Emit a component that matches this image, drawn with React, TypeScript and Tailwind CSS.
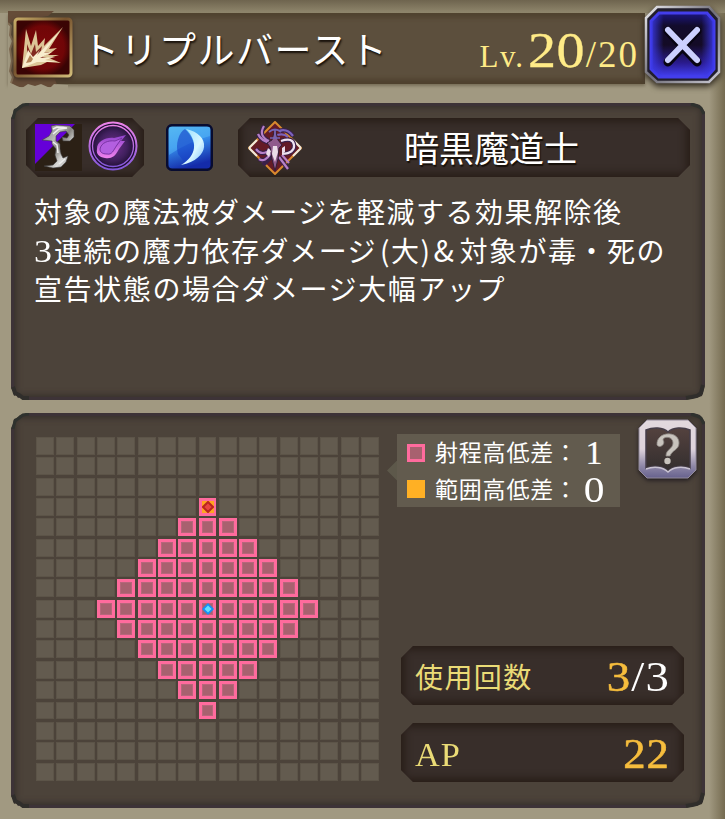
import React from "react";

const JP = "font-['Noto_Sans_CJK_JP',sans-serif]";
const SERIF = "font-['Liberation_Serif',serif]";
const OCTAGON =
  "[clip-path:polygon(12px_0,calc(100%-12px)_0,100%_12px,100%_calc(100%-12px),calc(100%-12px)_100%,12px_100%,0_calc(100%-12px),0_12px)]";
const WELL = "bg-[#382e2a] shadow-[inset_0_0_9px_3px_#261b15]";
const PANEL =
  "bg-[#4c433a] shadow-[inset_0_0_0_3px_#3d3337,inset_0_0_6px_5px_#37302b]";

function BurstIcon() {
  return (
    <svg width="60" height="62" viewBox="0 0 60 62" className="shrink-0 drop-shadow-[0_2px_2px_#3b2b20]">
      <defs>
        <linearGradient id="gold" x1="0" y1="0" x2="1" y2="1">
          <stop offset="0" stopColor="#c6ac68" />
          <stop offset=".45" stopColor="#77532e" />
          <stop offset="1" stopColor="#d0ba78" />
        </linearGradient>
        <radialGradient id="red">
          <stop offset="0" stopColor="#7c0709" />
          <stop offset=".75" stopColor="#700607" />
          <stop offset="1" stopColor="#3a0404" />
        </radialGradient>
      </defs>
      <rect x="2" y="2" width="56" height="57" rx="3" fill="url(#red)" stroke="url(#gold)" strokeWidth="3" />
      <path
        d="M9 51 L13 12 L18 29 L23 13 L25 29 L32 21 L31 29 L50 10 L36 32 L44 31 L35 38 L46 38 L36 41 L48 46 L34 45 L28 48 Z"
        fill="#dcc596"
      />
      <path d="M14 43 L14 27 L18 37 L22 27 L23 35 L29 29 L28 34 L40 22 L30 36 L37 35 L29 40 L34 41 L24 43Z" fill="#82291f" />
      <path d="M9 51 L15 33 L20 40 L27 33 L24 38 L47 14 L31 36 L39 35 L27 41 L42 40 L32 43 L44 45 L24 45Z" fill="#f8edcd" />
      <path d="M13 46 L17 38 L20 42 L18 45Z" fill="#b28357" />
    </svg>
  );
}

function CloseButton() {
  return (
    <button aria-label="close" className="h-[82px] w-[78px] shrink-0 drop-shadow-[0_3px_3px_#292218]">
      <svg width="78" height="82" viewBox="0 0 78 82">
        <defs>
          <linearGradient id="steel" x1="0" y1="0" x2="1" y2="1">
            <stop offset="0" stopColor="#e8e8ec" />
            <stop offset=".5" stopColor="#716f79" />
            <stop offset="1" stopColor="#c9c8d2" />
          </linearGradient>
          <linearGradient id="glow" x1="0" y1="0" x2="0" y2="1">
            <stop offset="0" stopColor="#1c1680" />
            <stop offset=".2" stopColor="#120b2c" />
            <stop offset=".5" stopColor="#140b26" />
            <stop offset=".78" stopColor="#2a1b8e" />
            <stop offset="1" stopColor="#4340f6" />
          </linearGradient>
          <linearGradient id="edge" x1="0" y1="0" x2="1" y2="0">
            <stop offset="0" stopColor="#3b39e8" stopOpacity=".9" />
            <stop offset=".2" stopColor="#3b39e8" stopOpacity="0" />
            <stop offset=".8" stopColor="#3b39e8" stopOpacity="0" />
            <stop offset="1" stopColor="#3b39e8" stopOpacity=".9" />
          </linearGradient>
        </defs>
        <path d="M13 2 H65 L75 13 V67 L65 77 H13 L2 67 V13Z" fill="#211e2c" stroke="url(#steel)" strokeWidth="2.5" />
        <path d="M15 8 H63 L70 16 V64 L63 72 H15 L7 64 V16Z" fill="url(#glow)" stroke="#443eec" strokeWidth="3" />
        <path d="M15 8 H63 L70 16 V64 L63 72 H15 L7 64 V16Z" fill="url(#edge)" />
        <path d="M24 26 L53 57 M53 26 L24 57" stroke="#080413" strokeWidth="9" strokeLinecap="round" />
        <path d="M24 25 L53 55 M53 25 L24 55" stroke="#ccd0ff" strokeWidth="6" strokeLinecap="round" />
      </svg>
    </button>
  );
}

function ScytheIcon() {
  return (
    <svg width="47" height="47" viewBox="0 0 47 47" className="shrink-0">
      <defs>
        <linearGradient id="metal" x1="0" y1="0" x2="1" y2="1">
          <stop offset="0" stopColor="#77777a" />
          <stop offset=".35" stopColor="#b9b9b9" />
          <stop offset=".5" stopColor="#85837e" />
          <stop offset=".7" stopColor="#dcdcda" />
          <stop offset="1" stopColor="#8d8d8b" />
        </linearGradient>
      </defs>
      <path d="M0 0H47V47H0Z" fill="#2b2015" />
      <path d="M0 0H40L0 40Z" fill="#6500d8" />
      <path
        d="M16 2 L21 1 L35 2 L39 6 L39 13 L35 17 L28 17 L27 13 L32 14 L34 11 L31 7 L25 8 L21 12 L21 17 L25 20 L25 25 L26 30 L28 34 L33 32 L31 38 L26 43 L18 44 L9 42 L18 41 L22 37 L20 31 L21 25 L17 20 L17 17 L7 16 L14 12 L17 7Z"
        fill="url(#metal)"
        stroke="#3f3e40"
        strokeWidth=".6"
      />
      <path d="M18 5 L22 3 L32 4 L24 5 L18 10 M18 18 L22 21 L23 29 M24 40 L30 35" stroke="#eee" strokeWidth="1.5" fill="none" />
    </svg>
  );
}

function CometIcon() {
  return (
    <svg width="50" height="50" viewBox="0 0 50 50" className="shrink-0">
      <defs>
        <radialGradient id="orb">
          <stop offset="0" stopColor="#6e2f8c" />
          <stop offset=".6" stopColor="#41205e" />
          <stop offset="1" stopColor="#180b2a" />
        </radialGradient>
        <linearGradient id="ring" x1="0" y1="0" x2="0" y2="1">
          <stop offset="0" stopColor="#ec83e8" />
          <stop offset="1" stopColor="#8257d9" />
        </linearGradient>
        <linearGradient id="flame" x1="0" y1="0" x2="0" y2="1">
          <stop offset="0" stopColor="#8f42cd" />
          <stop offset="1" stopColor="#ef82ed" />
        </linearGradient>
      </defs>
      <circle cx="25" cy="25" r="23.5" fill="url(#orb)" stroke="url(#ring)" strokeWidth="2" />
      <circle cx="25" cy="25" r="20.5" fill="none" stroke="url(#ring)" strokeWidth="1.3" />
      <path d="M9 28 C9 20 18 16 26 17 L38 14 L33 20 L37 20 L31 28 C27 36 23 38 17 37 C11 36 8 33 9 28Z" fill="url(#flame)" />
      <path d="M12 28 C13 22 20 19 27 20 L34 17 L29 24 C25 30 24 34 19 33 C14 33 12 31 12 28Z" fill="#b35fe0" stroke="#722e9d" strokeWidth=".9" />
    </svg>
  );
}

function MoonIcon() {
  return (
    <svg width="47" height="47" viewBox="0 0 47 47" className="shrink-0">
      <defs>
        <linearGradient id="sky" x1="0" y1="0" x2=".3" y2="1">
          <stop offset="0" stopColor="#4cacec" />
          <stop offset=".5" stopColor="#358bea" />
          <stop offset="1" stopColor="#142ba9" />
        </linearGradient>
        <linearGradient id="moon" x1="0" y1="0" x2="1" y2="1">
          <stop offset="0" stopColor="#95ddff" />
          <stop offset=".6" stopColor="#d8f7ff" />
          <stop offset="1" stopColor="#79bcff" />
        </linearGradient>
      </defs>
      <rect x="1.2" y="1.2" width="44.6" height="44.6" rx="5" fill="url(#sky)" stroke="#080c30" strokeWidth="2.5" />
      <path d="M3 3H44V12Q24 17 3 31Z" fill="#6bd4ff" opacity=".35" />
      <path d="M19 5 C13 8 9 20 12 30 L20 40 C31 29 31 17 19 5Z" fill="#153fc6" opacity=".6" />
      <path d="M20 5 C45 10 45 35 15 41 C31 32 32 17 20 5Z" fill="url(#moon)" />
    </svg>
  );
}

function ClassEmblem() {
  return (
    <svg width="54" height="54" viewBox="0 0 54 54" className="shrink-0">
      <path d="M27 1 L53 27 L27 53 L1 27Z" fill="#641b26" stroke="#d98a2e" strokeWidth="2" />
      <path d="M1 27 L9 19 M1 27 L9 35 M53 27 L45 19 M53 27 L45 35" stroke="#eee7dc" strokeWidth="2" />
      <g fill="none" stroke="#392049" strokeWidth="4.5">
        <path d="M16 5 Q10 15 21 20 M10 13 Q13 20 23 22 M8 28 Q14 36 23 28 M11 38 Q17 42 23 32 M33 20 Q45 16 46 24 T34 33 M31 10 Q39 7 45 15 M31 36 L40 48 M23 36 L15 44" />
      </g>
      <g fill="none" stroke="#b580c8" strokeWidth="2.2">
        <path d="M16 5 Q10 15 21 20 M10 13 Q13 20 23 22 M8 28 Q14 36 23 28 M11 38 Q17 42 23 32 M31 36 L40 48 M34 34 L41 42" />
        <path d="M31 10 Q39 7 45 15 M29 14 Q36 12 40 16" stroke="#7a62bb" />
        <path d="M33 20 Q45 16 46 24 T34 33" stroke="#eee2f0" />
      </g>
      <path d="M27 7 L30 19 L34 24 L31 27 L30 38 L27 50 L24 38 L22 26 L19 22 L24 19Z" fill="#8f5a8c" stroke="#321d37" />
      <path d="M25 25 L29 25 L30 31 L27 41 L24 33Z M20 27 L23 30 L21 36 L18 33Z M34 27 L37 25 L37 31 L34 33Z" fill="#eadce9" />
      <path d="M21 11 Q27 6 33 11 M27 8V18 M22 17H32" fill="none" stroke="#7465b5" strokeWidth="1.7" />
    </svg>
  );
}

function HelpButton() {
  return (
    <button aria-label="help" className="h-[62px] w-[60px] shrink-0 drop-shadow-[0_2px_2px_#211c20]">
      <svg width="60" height="62" viewBox="0 0 60 62">
        <defs>
          <linearGradient id="frame" x1="0" y1="0" x2="0" y2="1">
            <stop offset="0" stopColor="#e2d9de" />
            <stop offset=".5" stopColor="#ded3dc" />
            <stop offset=".8" stopColor="#8d86a6" />
            <stop offset="1" stopColor="#67628e" />
          </linearGradient>
          <linearGradient id="bookfill" x1="0" y1="0" x2="0" y2="1">
            <stop offset="0" stopColor="#54423f" />
            <stop offset="1" stopColor="#332e2e" />
          </linearGradient>
        </defs>
        <path d="M9 1 H50 L58 9 V51 L50 59 H9 L1 51 V9Z" fill="url(#frame)" stroke="#938b9b" />
        <path
          d="M8 11 C15 8 25 8 30 13 C35 8 45 8 52 11 V49 C44 46 35 47 30 52 C25 47 16 46 8 49Z"
          fill="url(#bookfill)"
          stroke="#463e49"
          strokeWidth="1.5"
        />
        <path d="M8 50 C16 47 25 48 30 53 C35 48 44 47 52 50" fill="none" stroke="#c9c3d2" strokeWidth="1.5" />
        <path d="M19 26 C18 12 41 11 41 24 C41 31 34 31 32 37 L28 37 C28 30 35 30 35 24 C35 17 25 17 25 21 C28 25 22 30 19 26Z" fill="#c8c3bd" stroke="#8f8a86" strokeWidth=".8" />
        <circle cx="29.5" cy="42" r="3.2" fill="#c8c3bd" />
      </svg>
    </button>
  );
}

function TornCorners() {
  return (
    <svg className="pointer-events-none absolute inset-0 h-full w-full">
      <path d="M0 0H17L14 1L9 2L6 5L3 6L2 11L0 15Z" fill="#a19981" />
      <path d="M2 16L4 8L8 5L12 2L18 1" fill="none" stroke="#2f322e" strokeWidth="3" />
      <svg x="100%" y="100%" overflow="visible">
        <path d="M0 0H-19L-15-1L-10-2L-6-3L-3-4L-1-11L0-15Z" fill="#a19981" />
        <path d="M-2-15L-4-7L-8-4L-13-3L-19-2" fill="none" stroke="#302e2b" strokeWidth="4" />
      </svg>
      <svg x="0" y="100%" overflow="visible">
        <path d="M0 0H13L10-3L7-2L5-5L3-4L2-9L0-12Z" fill="#a19981" />
        <path d="M2-13L4-7L8-5L12-2L18-2" fill="none" stroke="#302e2b" strokeWidth="4" />
      </svg>
      <svg x="100%" y="0" overflow="visible">
        <path d="M0 0H-12L-8 1L-5 2L-2 6L0 9Z" fill="#a19981" />
        <path d="M-1 11L-4 5L-8 3L-14 1" fill="none" stroke="#2f322e" strokeWidth="3" />
      </svg>
    </svg>
  );
}

function Cell({ row, col }: { row: number; col: number }) {
  const distance = Math.abs(row - 8) + Math.abs(col - 8);
  if (distance > 5) {
    return <div className="border border-[#5c5448] bg-[#635b4f]" />;
  }
  const target = row === 3 && col === 8;
  return (
    <div className="flex items-center justify-center border-[3px] border-[#ff6b9d] bg-[#a8616f] shadow-[inset_0_0_0_1px_#b7667b]">
      {target && (
        <svg width="12" height="12" viewBox="0 0 12 12" className="shrink-0">
          <path d="M0 0H12V12H0Z" fill="#ffa51f" />
          <path d="M6 1L11 6L6 11L1 6Z" fill="#e94440" stroke="#b9251e" strokeWidth="2" />
        </svg>
      )}
      {distance === 0 && (
        <svg width="12" height="12" viewBox="0 0 12 12" className="shrink-0">
          <path d="M6 0L12 6L6 12L0 6Z" fill="#168ff5" />
          <path d="M6 2.5L9.5 6L6 9.5L2.5 6Z" fill="#62e0ff" />
        </svg>
      )}
    </div>
  );
}

function RangeGrid() {
  return (
    <div className="grid h-[343.5px] w-[343px] shrink-0 grid-cols-17 grid-rows-17 gap-[2.4px]">
      {Array.from({ length: 289 }, (_, i) => (
        <Cell key={i} row={Math.floor(i / 17)} col={i % 17} />
      ))}
    </div>
  );
}

function Legend() {
  return (
    <div className="flex items-center">
      <div className="h-5 w-[10px] bg-[#5d584a] [clip-path:polygon(100%_0,100%_100%,0_50%)]" />
      <div className="flex h-[73px] w-[223px] flex-col justify-between bg-[#625b4e] pl-[10px]">
        <div className="flex h-[37px] items-center">
          <i className="size-[18px] border-[3px] border-[#ff6b9d] bg-[#a8616f]" />
          <span className="-mt-[2px] ml-[10px] w-[144px] shrink-0 text-[23px] leading-none tracking-[0.8px] whitespace-nowrap">射程高低差：</span>
          <span className={`${SERIF} ml-[3px] w-[24px] text-center text-[34px] leading-none [-webkit-text-stroke:0.2px_white]`}>1</span>
        </div>
        <div className="flex h-[36px] items-center">
          <i className="size-[18px] bg-[#ffb024]" />
          <span className="-mt-[2px] ml-[10px] w-[144px] shrink-0 text-[23px] leading-none tracking-[0.8px] whitespace-nowrap">範囲高低差：</span>
          <span className={`${SERIF} mt-[2px] ml-[3px] w-[24px] scale-x-[1.15] text-center text-[36px] leading-none`}>0</span>
        </div>
      </div>
    </div>
  );
}

export default function App() {
  return (
    <main className={`${JP} flex h-[819px] w-[725px] flex-col overflow-hidden bg-[linear-gradient(90deg,#a19981_0,#a19981_97.8%,#756b50_100%)] text-white`}>
      <div className="h-[13px] shrink-0 bg-linear-to-b from-[#6e644e] to-[#91886e]" />
      <header className="flex h-[72px] shrink-0 pl-[8px]">
        <div className="relative flex h-[71px] w-[637px] items-center bg-[#5c4f3d] pl-[5px] shadow-[inset_0_5px_4px_#504330,inset_0_-5px_4px_#4e412e,0_2px_3px_#766d57]">
          <svg className="absolute -top-[2px] left-0 h-[79px] w-[60px]" viewBox="0 0 60 79">
            <path d="M0 0H46L40 5L0 12Z M0 60V76H50L46 66Z" fill="#654c38" />
            <path d="M0 12L3 15L2 24L5 30L2 38L4 50L2 60L5 66L3 72L9 75L14 77L20 73L27 75L33 73L42 77L46 73L60 74V79H0Z" fill="#a19981" />
            <path d="M0 12L3 15L2 24L5 30L2 38L4 50L2 60L5 66L3 72" fill="none" stroke="#806c53" strokeWidth="2" />
          </svg>
          <div className="relative -mt-[2px] flex items-center">
            <BurstIcon />
            <h1 className="mt-[2px] ml-[9px] text-[37px] leading-none tracking-[1.5px] whitespace-nowrap [text-shadow:1px_2px_2px_#171009]">トリプルバースト</h1>
          </div>
          <div className={`${SERIF} relative mt-[3px] ml-auto flex items-baseline pr-[6px] text-[#ffeb87] leading-none`}>
            <span className="text-[31px] tracking-[1.7px]">Lv.</span>
            <span className="ml-[3px] inline-block w-[57px] origin-left scale-x-[1.1] text-[51px] tracking-[0.5px] [-webkit-text-stroke:0.3px_#ffeb87]">20</span>
            <span className="ml-[1px] inline-block text-[37px] tracking-[2px]">/20</span>
          </div>
        </div>
        <div className="-mt-[8px] -ml-[1px]"><CloseButton /></div>
      </header>

      <section className={`${PANEL} relative ml-[11px] mt-[18px] h-[297px] w-[694px] shrink-0 px-[15px] pt-[15px]`}>
        <TornCorners />
        <div className="flex h-[59px] items-center">
          <div className={`${OCTAGON} ${WELL} flex h-[59px] w-[118px] items-center pl-[9px]`}>
            <ScytheIcon />
            <div className="-mt-[4px] ml-[6px]"><CometIcon /></div>
          </div>
          <div className="ml-[22px]"><MoonIcon /></div>
          <div className={`${OCTAGON} ${WELL} ml-[25px] flex h-[59px] w-[452px] items-center pl-[10px]`}>
            <ClassEmblem />
            <span className="-mt-[3px] ml-[102px] text-[35px] leading-none [text-shadow:1px_2px_1px_#171009]">暗黒魔道士</span>
          </div>
        </div>
        <div className="ml-[8px] mt-[15px] text-[28px] leading-[38.5px] tracking-[1.5px] whitespace-nowrap">
          <p className="h-[38.5px]">対象の魔法被ダメージを軽減する効果解除後</p>
          <p className="flex h-[38.5px] items-baseline">
            <span className={`${SERIF} inline-block w-[20px] origin-left scale-x-[1.12] text-[32px] leading-none`}>3</span>
            <span>連続の魔力依存ダメージ</span>
            <span className="ml-[3px]">(大)</span>
            <span className="ml-[2px] w-[26px] text-[30px] leading-none tracking-normal">&amp;</span>
            <span>対象が毒・死の</span>
          </p>
          <p className="h-[38.5px] tracking-[1.6px]">宣告状態の場合ダメージ大幅アップ</p>
        </div>
      </section>

      <section className={`${PANEL} relative ml-[11px] mt-[13px] flex h-[395px] w-[694px] shrink-0 pl-[25px] pt-[24px]`}>
        <TornCorners />
        <RangeGrid />
        <div className="-mt-[3px] ml-[8px] flex w-[314px] flex-col">
          <div className="flex">
            <Legend />
            <div className="-mt-[15px] ml-[18px]"><HelpButton /></div>
          </div>
          <div className={`${OCTAGON} ${WELL} ml-[14px] mt-[139px] flex h-[59px] w-[283px] shrink-0 items-center justify-between pl-[14px] pr-[14px]`}>
            <span className="text-[28px] leading-none tracking-[1.4px] text-[#eadb76]">使用回数</span>
            <span className={`${SERIF} mt-[2px] origin-right scale-x-[1.09] text-[43px] leading-none tracking-[1px]`}>
              <span className="text-[#f6bd3d] [-webkit-text-stroke:0.5px_#f6bd3d]">3</span>/3
            </span>
          </div>
          <div className={`${OCTAGON} ${WELL} ml-[14px] mt-[18px] flex h-[59px] w-[283px] shrink-0 items-center justify-between pl-[14px] pr-[14px]`}>
            <span className={`${SERIF} mt-[6px] origin-left scale-x-[1.04] text-[33px] leading-none tracking-[1px] text-[#eadb76]`}>AP</span>
            <span className={`${SERIF} mt-[1px] origin-right scale-x-[1.04] text-[43px] leading-none tracking-[1px] text-[#f6bd3d] [-webkit-text-stroke:0.6px_#f6bd3d]`}>22</span>
          </div>
        </div>
      </section>
    </main>
  );
}
